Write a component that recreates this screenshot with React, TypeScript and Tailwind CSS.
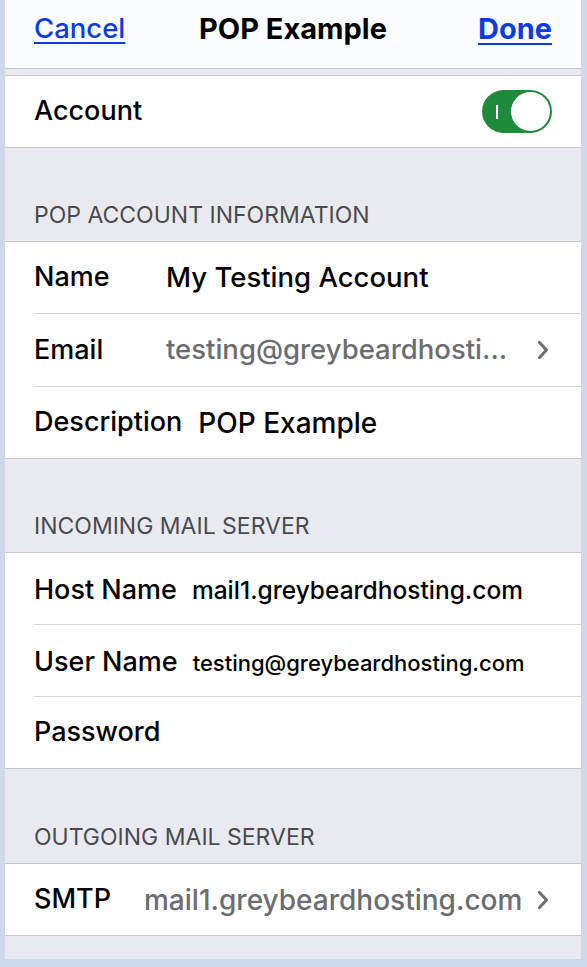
import React from "react";

type Row = {
  label: string;
  value?: string;
  labelClass: string;
  valueClass: string;
  chevron?: boolean;
  baseline?: boolean;
  tall?: boolean;
};

const popRows: Row[] = [
  { label: "Name", value: "My Testing Account", labelClass: "w-[132px]", valueClass: "text-[27.5px] text-black" },
  { label: "Email", value: "testing@greybeardhosti...", labelClass: "w-[132px]", valueClass: "text-[27.5px] text-[#6c6c71]", chevron: true, tall: true },
  { label: "Description", value: "POP Example", labelClass: "mr-[16px]", valueClass: "text-[28px] text-black" },
];

const incomingRows: Row[] = [
  { label: "Host Name", value: "mail1.greybeardhosting.com", labelClass: "mr-[15px]", valueClass: "text-[24.5px] text-black", baseline: true },
  { label: "User Name", value: "testing@greybeardhosting.com", labelClass: "mr-[15px]", valueClass: "text-[22px] text-black", baseline: true },
  { label: "Password", labelClass: "", valueClass: "" },
];

const outgoingRows: Row[] = [
  { label: "SMTP", value: "mail1.greybeardhosting.com", labelClass: "w-[110px]", valueClass: "text-[28px] text-[#6c6c71]", chevron: true },
];

const Chevron = () => (
  <svg width="14" height="20" viewBox="0 0 14 20" className="ml-auto shrink-0">
    <path d="M3.5 2.5 L10.5 10 L3.5 17.5" fill="none" stroke="#707075" strokeWidth="3.2" strokeLinecap="round" strokeLinejoin="round" />
  </svg>
);

const Toggle = () => (
  <div className="ml-auto flex h-[43px] w-[70px] items-center rounded-full bg-[#1e8a3b] p-[2px]">
    <span className="ml-[12px] h-[14px] w-[2px] bg-white" />
    <span className="ml-auto h-[39px] w-[39px] rounded-full bg-white" />
  </div>
);

const Group = ({ rows }: { rows: Row[] }) => (
  <div className="border-y border-[#c8c8cd] bg-white">
    {rows.map((row, i) => (
      <div key={row.label}>
        {i > 0 && <div className="ml-[29px] h-px bg-[#d6d6da]" />}
        <div
          className={`flex pl-[29px] pr-[31px] font-medium ${row.tall ? "h-[72px]" : "h-[71px]"} ${
            row.baseline ? "items-baseline pt-[17px]" : "items-center"
          }`}
        >
          <span className={`shrink-0 text-[27px] text-black ${row.labelClass}`}>{row.label}</span>
          {row.value && <span className={`whitespace-nowrap ${row.valueClass}`}>{row.value}</span>}
          {row.chevron && <Chevron />}
        </div>
      </div>
    ))}
  </div>
);

const Header = ({ title, tall }: { title: string; tall?: boolean }) => (
  <div className={`flex items-end pb-[9px] pl-[29px] text-[23px] text-[#4a4a4f] ${tall ? "h-[94px]" : "h-[93px]"}`}>
    {title}
  </div>
);

export default function App() {
  return (
    <div className="min-h-screen bg-[#cdd8ea] pb-[9px] pl-[5px] pr-[6px] font-['Inter',sans-serif]">
      <div className="bg-[#e9eaef]">
        <nav className="flex h-[69px] items-center border-b border-[#c6c6cb] bg-[#fbfcfd] px-[29px] pb-[10px]">
          <div className="flex-1">
            <a href="#" className="text-[27.5px] font-medium text-[#0b3ce3] underline underline-offset-[4px]">Cancel</a>
          </div>
          <h1 className="text-[29px] font-bold text-black">POP Example</h1>
          <div className="flex flex-1 justify-end">
            <a href="#" className="text-[29px] font-bold text-[#0b3ce3] underline underline-offset-[4px]">Done</a>
          </div>
        </nav>
        <div className="h-[6px]" />
        <div className="border-y border-[#c8c8cd] bg-white">
          <div className="flex h-[71px] items-center pl-[29px] pr-[29px]">
            <span className="text-[27px] font-medium text-black">Account</span>
            <Toggle />
          </div>
        </div>

        <Header title="POP ACCOUNT INFORMATION" />
        <Group rows={popRows} />

        <Header title="INCOMING MAIL SERVER" />
        <Group rows={incomingRows} />

        <Header title="OUTGOING MAIL SERVER" tall />
        <Group rows={outgoingRows} />

        <div className="h-[23px]" />
      </div>
    </div>
  );
}
